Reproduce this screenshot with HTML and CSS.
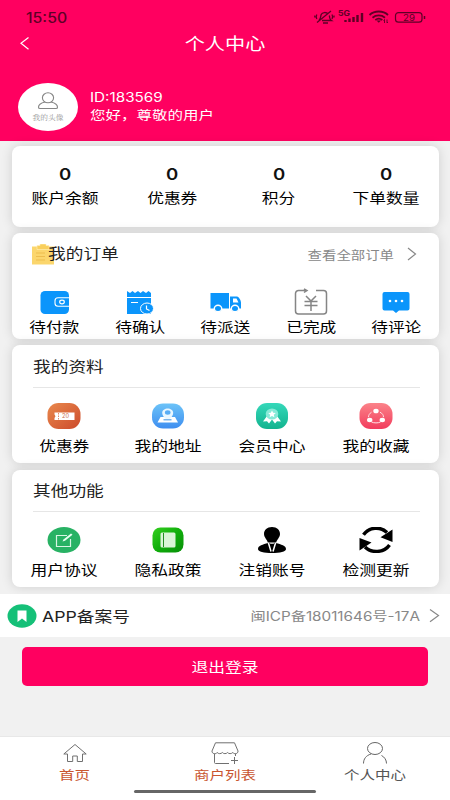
FILE: index.html
```html
<!DOCTYPE html>
<html lang="zh-CN">
<head>
<meta charset="utf-8">
<title>个人中心</title>
<link rel="stylesheet" href="styles.css">
</head>
<body>
<svg width="0" height="0" class="defs">
  <defs>
    <linearGradient id="orange" x1="0" y1="0" x2="1" y2="1"><stop offset="0" stop-color="#e9894d"/><stop offset="1" stop-color="#cc4a2b"/></linearGradient>
    <linearGradient id="blue" x1="0" y1="0" x2="0" y2="1"><stop offset="0" stop-color="#6cc3f8"/><stop offset="1" stop-color="#3e8ef0"/></linearGradient>
    <linearGradient id="teal" x1="0" y1="0" x2="0" y2="1"><stop offset="0" stop-color="#35d8ba"/><stop offset="1" stop-color="#12b38e"/></linearGradient>
    <linearGradient id="rose" x1="0" y1="0" x2="0" y2="1"><stop offset="0" stop-color="#fb8389"/><stop offset="1" stop-color="#f23c5d"/></linearGradient>
    <linearGradient id="green" x1="0" y1="0" x2="1" y2="1"><stop offset="0" stop-color="#35cf20"/><stop offset=".5" stop-color="#10ae0b"/><stop offset="1" stop-color="#078f08"/></linearGradient>
  </defs>
</svg>
<header class="top">
  <div class="status">
    <span class="clock">15:50</span>
    <svg class="signals" width="112" height="16" viewBox="0 0 112 16" fill="none" stroke="#5e0026">
      <g stroke-width="1.3"><path d="M5 11.5c2-2 1.500-4 2.200-6 1-2.300 5-2.800 7-.5M15.300 6.500c.8 3-.2 3.500 2.200 5H8M9 14h5M3 13.500L17 2M2.800 5.500c-.8 1.500-.8 3 0 4.500M.8 6.500v2M18 5.500c.8 1.500.8 3 0 4.500M20 6.500v2"/></g>
      <g stroke-width="2.400"><path d="M31.500 13v-2M35.500 13v-3.500M39.500 13V8M43.500 13V6M48 13V4"/></g>
      <g stroke-width="1.800"><path d="M55.500 6c5-4.700 13.500-4.700 18.500 0M58.500 8.700c3.500-3 9-3 12.500 0M61.300 11c2-1.500 5-1.500 7 0"/></g>
      <path d="M62.500 11.500h4.500l-2.200 2.300z" fill="#5e0026" stroke="none"/>
      <path d="M70.500 14v-3.500M69.500 11.500l1-1M73 10.500V14l1-1" stroke-width=".9"/>
      <rect x="81.500" y="3.600" width="26.500" height="9.600" rx="3" stroke-width="1.200"/>
      <path d="M110.500 7v3" stroke-width="1.500"/>
      <text class="net" x="24" y="7" textLength="12" lengthAdjust="spacingAndGlyphs">5G</text>
      <text class="bat" x="89" y="11.600" textLength="12" lengthAdjust="spacingAndGlyphs">29</text>
    </svg>
  </div>
  <div class="navbar">
    <svg class="back" width="12" height="14" viewBox="0 0 12 14"><path d="M9.500 .5L2 6.300l7.500 6" fill="none" stroke="#fff" stroke-width="1.200"/></svg>
    <h1 class="wide">个人中心</h1>
  </div>
  <div class="profile">
    <div class="avatar">
      <svg width="22" height="18" viewBox="0 0 22 18" fill="none" stroke="#858585" stroke-width="1.100"><ellipse cx="11" cy="5.800" rx="5.600" ry="5"/><path d="M8 10c-4 1-6.500 3.200-6.500 5.200 0 1 .7 1.300 1.500 1.300h16c1 0 1.500-.3 1.500-1.300 0-2-2.500-4.200-6.500-5.200"/></svg>
      <span>我的头像</span>
    </div>
    <div class="who"><span class="uid">ID:183569</span><span class="hello">您好，尊敬的用户</span></div>
  </div>
</header>

<main>
  <section class="card stats">
    <div class="cell"><b>0</b><span class="label">账户余额</span></div>
    <div class="cell"><b>0</b><span class="label">优惠券</span></div>
    <div class="cell"><b>0</b><span class="label">积分</span></div>
    <div class="cell"><b>0</b><span class="label">下单数量</span></div>
  </section>

  <section class="card orders">
    <div class="head">
      <svg class="clip" width="23" height="21" viewBox="0 0 23 21"><path d="M0 2.500h22v18H0z" fill="#fbd66d"/><path d="M5 1.500h3V0h6v1.500h3v4H5z" fill="#f9cf5c" stroke="#fff0bd" stroke-width=".6"/><path d="M4 9h9M4 12.500h9M4 16h9" stroke="#edbd4e"/></svg>
      <h2>我的订单</h2>
      <span class="all">查看全部订单</span>
      <svg class="more" width="10" height="14" viewBox="0 0 10 14"><path d="M1 1l7.500 6L1 13" fill="none" stroke="#888" stroke-width="1.200"/></svg>
    </div>
    <div class="grid">
      <div class="cell">
        <svg width="34" height="26" viewBox="0 0 34 26"><rect x="2.500" y="2" width="28.500" height="23" rx="4.500" fill="#0b95fb"/><path d="M31 8.800H20a3 3 0 0 0-3 3v2.500a3 3 0 0 0 3 3h11" fill="none" stroke="#fff" stroke-width="1.100"/><ellipse cx="24" cy="13" rx="2.300" ry="1.800" fill="none" stroke="#fff" stroke-width="1.200"/></svg>
        <span class="label">待付款</span>
      </div>
      <div class="cell">
        <svg width="34" height="26" viewBox="0 0 34 26"><path d="M4 2l3 2 2.500-2L12 4l3-2 2.500 2L20 2l3 2 2.500-2L28 4V25H4z" fill="#0b95fb"/><path d="M4 8.500h24M8 13.500h7" stroke="#fff" stroke-width="1.100"/><ellipse cx="24" cy="19.500" rx="6.500" ry="5.500" fill="#0b95fb" stroke="#fff"/><path d="M23.500 16.500v3.500l3 1.500" fill="none" stroke="#fff" stroke-width="1.200"/></svg>
        <span class="label">待确认</span>
      </div>
      <div class="cell">
        <svg width="34" height="26" viewBox="0 0 34 26"><path d="M1.500 4H20v15.500H1.500zM21 7.500h7c2 .5 4 4 4 6v6H21z" fill="#0b95fb"/><path d="M24 9.500h3.500l2 4H24z" fill="#fff"/><g fill="#0b95fb" stroke="#fff" stroke-width="1.400"><ellipse cx="9" cy="19.500" rx="3.700" ry="3.200"/><ellipse cx="26" cy="19.500" rx="3.700" ry="3.200"/></g></svg>
        <span class="label">待派送</span>
      </div>
      <div class="cell">
        <svg class="yen" width="34" height="28" viewBox="0 0 34 28" fill="none" stroke="#858585" stroke-width="1.500"><path d="M13 2.500H4.500a3 3 0 0 0-3 3V23a3 3 0 0 0 3 3h25a3 3 0 0 0 3-3V5.500a3 3 0 0 0-3-3H22M10 .8l3 1.700-3 2M12 8l5 5 5-5M10.500 13.500h13M10.500 17.500h13M17 13v10"/></svg>
        <span class="label">已完成</span>
      </div>
      <div class="cell">
        <svg width="34" height="26" viewBox="0 0 34 26"><path d="M5.500 3h23a2 2 0 0 1 2 2v14.500a2 2 0 0 1-2 2H20L17 24l-3-2.500H5.500a2 2 0 0 1-2-2V5a2 2 0 0 1 2-2z" fill="#0b95fb"/><g fill="#fff"><circle cx="11" cy="12" r="1.300"/><circle cx="17" cy="12" r="1.300"/><circle cx="23" cy="12" r="1.300"/></g></svg>
        <span class="label">待评论</span>
      </div>
    </div>
  </section>

  <section class="card tools">
    <h2>我的资料</h2>
    <div class="grid">
      <div class="cell">
        <svg width="34" height="26" viewBox="0 0 34 26"><rect x=".5" width="33" height="26" rx="11" fill="url(#orange)"/><path d="M7.500 9.500h20V17h-20v-2l1-1.700-1-1.700z" fill="#fff"/><path d="M11.500 10v6.500" stroke="#e08a6a" stroke-dasharray="1.500 1"/><text class="amount" x="15" y="15.200" textLength="7" lengthAdjust="spacingAndGlyphs">20</text></svg>
        <span class="label">优惠券</span>
      </div>
      <div class="cell">
        <svg width="34" height="26" viewBox="0 0 34 26"><rect x="1" y=".5" width="32" height="25" rx="11" fill="url(#blue)"/><path d="M9.500 14h14.500l3 5.500H6.500z" fill="#fff"/><path d="M16.700 17.500c-3-2.500-5.500-4.500-5.500-7.500 0-6 11-6 11 0 0 3-2.500 5-5.500 7.500z" fill="#e9f7ff"/><ellipse cx="16.700" cy="9.500" rx="2.800" ry="2.200" fill="#58adf5"/><path d="M12.500 16.800h8" stroke="#58a3e8" stroke-width="1.200"/></svg>
        <span class="label">我的地址</span>
      </div>
      <div class="cell">
        <svg width="34" height="26" viewBox="0 0 34 26"><rect x="1" width="32" height="26" rx="11" fill="url(#teal)"/><path d="M12 13l-4 5.500 4-.3 2 2.300 3-4 3 4 2-2.300 4 .3-4-5.500z" fill="#fff"/><ellipse cx="17" cy="11" rx="6.300" ry="5.500" fill="#88ead8"/><path d="M17 7.500l1.200 2.300 2.600.3-2 1.700.6 2.400-2.400-1.200-2.400 1.200.6-2.400-2-1.700 2.600-.3z" fill="#fff"/></svg>
        <span class="label">会员中心</span>
      </div>
      <div class="cell">
        <svg width="34" height="26" viewBox="0 0 34 26"><rect x=".5" width="33" height="26" rx="11" fill="url(#rose)"/><path d="M12.500 9.200c-2 1.300-3 2.800-3 5M21 9.200c2.500 1.300 3.500 2.800 3.500 5M12.500 19c2.500 1.200 6.500 1.200 9 0" fill="none" stroke="#ffe0e4"/><g fill="#fff"><ellipse cx="17" cy="8" rx="2.700" ry="2.300"/><ellipse cx="10.700" cy="17" rx="2.700" ry="2.200"/><ellipse cx="23.300" cy="17" rx="2.700" ry="2.200"/></g></svg>
        <span class="label">我的收藏</span>
      </div>
    </div>
  </section>

  <section class="card tools other">
    <h2>其他功能</h2>
    <div class="grid">
      <div class="cell">
        <svg width="34" height="26" viewBox="0 0 34 26"><ellipse cx="17" cy="13" rx="16.500" ry="13" fill="#28b264"/><path d="M20 8.500H9.500V19.500h14V12" fill="none" stroke="#d8f5e3" stroke-width="1.200"/><path d="M15.500 14.500l1-2 7.500-6 1.500 1.200-7.500 6z" fill="#eafff2"/></svg>
        <span class="label">用户协议</span>
      </div>
      <div class="cell">
        <svg width="34" height="26" viewBox="0 0 34 26"><rect x="1.500" y=".5" width="31" height="25" rx="8" fill="url(#green)"/><rect x="9.500" y="5.500" width="15" height="15" rx="1.500" fill="#d9f5d6"/><path d="M12.500 6v14" stroke="#238d22"/></svg>
        <span class="label">隐私政策</span>
      </div>
      <div class="cell">
        <svg width="34" height="26" viewBox="0 0 34 26"><path d="M17 0c5 0 8 3 8 7 0 3.500-3.500 6-4 9h-8c-.5-3-4-5.500-4-9 0-4 3-7 8-7z"/><path d="M13 16h8c5 1.500 10 2.500 10 6 0 2.600-6 4-14 4S3 24.600 3 22c0-3.500 5-4.500 10-6z"/><path d="M13.300 15.500l2.700 9M20.700 15.500l-2.700 9" stroke="#fff" stroke-width="1.500"/><path d="M14 15.500h6l-1.500 1.300h-3z" fill="#fff"/></svg>
        <span class="label">注销账号</span>
      </div>
      <div class="cell">
        <svg width="34" height="26" viewBox="0 0 34 26"><path d="M4.500 7.800C10-.3 21.500-.8 28 5.500M30.500 18C25 26 12.500 26.500 6 20" fill="none" stroke="#000" stroke-width="3.400"/><path d="M33.500 2.500V15L21.500 10.300zM.5 11v12.500L12.500 15.500z"/></svg>
        <span class="label">检测更新</span>
      </div>
    </div>
  </section>

  <div class="record">
    <svg width="30" height="24" viewBox="0 0 30 24"><ellipse cx="15" cy="12" rx="14.500" ry="11.700" fill="#15c078"/><path d="M10.500 6.500h9V18L15 14.500 10.500 18z" fill="#fff"/></svg>
    <span class="name">APP备案号</span>
    <span class="number">闽ICP备18011646号-17A</span>
    <svg class="more" width="11" height="14" viewBox="0 0 11 14"><path d="M1 .5L9.500 6.500 1 12.700" fill="none" stroke="#888" stroke-width="1.200"/></svg>
  </div>

  <button class="logout"><span class="label">退出登录</span></button>
</main>

<nav class="tabs">
  <div class="tab">
    <svg width="34" height="24" viewBox="0 0 34 24" fill="none" stroke="#707070"><path d="M17 2.500L5.800 12H9.500v7.500h5.200V14h4.600v5.500h5.200V12h3.700z"/></svg>
    <span>首页</span>
  </div>
  <div class="tab">
    <svg width="34" height="24" viewBox="0 0 34 24" fill="none" stroke="#707070"><path d="M7.500.8h19L30 9c.3 3-4 3.500-5.200 1.500-1.300 1.500-4.200 1.500-5.200 0-1.200 1.500-4.200 1.500-5.200 0-1.300 1.500-4.200 1.500-5.200 0C8 12.500 3.700 12 4 9zM6.500 12v8.500c0 .6.400 1 1 1H21M27.500 12v2M23 18.500h7M26.500 15v7"/></svg>
    <span>商户列表</span>
  </div>
  <div class="tab me">
    <svg width="34" height="24" viewBox="0 0 34 24" fill="none" stroke="#666"><ellipse cx="17" cy="6.500" rx="7.500" ry="6"/><path d="M13 12C8 13.500 5.500 17 5.500 21.500M23.500 13.500c3 1.500 5 4.500 5 8"/></svg>
    <span>个人中心</span>
  </div>
  <i class="homebar"></i>
</nav>
</body>
</html>
```

FILE: styles.css
```css
* { box-sizing: border-box; }
body {
  margin: 0;
  width: 450px;
  height: 800px;
  display: flex;
  flex-direction: column;
  overflow: hidden;
  background: #f1f1f1;
  color: #111;
  font-family: Inter, "Noto Sans CJK SC", sans-serif;
}
h1, h2 { margin: 0; font-weight: 400; width: fit-content; }
svg { display: block; flex: none; }
span { white-space: nowrap; }
.defs { position: absolute; }

.top { height: 141px; background: #ff0060; color: #fff; }
.status {
  height: 30px;
  padding: 4px 24px 0 26px;
  display: flex;
  align-items: center;
  justify-content: space-between;
}
.clock {
  color: #5e0026;
  font-size: 14px;
  font-weight: 500;
  transform: scaleX(1.13);
  transform-origin: left;
}
.signals text { fill: #5e0026; stroke: none; }
.net { font-size: 7px; font-weight: 700; }
.bat { font-size: 9px; }
.amount { font-size: 5.500px; fill: #c9694a; }
.navbar {
  height: 28px;
  display: grid;
  grid-template-columns: 40px 1fr 40px;
  align-items: center;
}
.back { margin-left: 19px; }
h1 { justify-self: center; font-size: 16.500px; line-height: 24px; }
.wide { transform: scaleX(1.22); }
.profile { display: flex; margin: 25px 0 0 18px; }
.avatar {
  width: 60px;
  height: 48px;
  border-radius: 50%;
  background: #fff;
  display: flex;
  flex-direction: column;
  align-items: center;
  padding-top: 9px;
}
.avatar span {
  margin-top: 2px;
  color: #999;
  font: 7px/11px "Noto Serif CJK SC", "Noto Sans CJK SC", sans-serif;
  transform: scaleX(1.1);
}
.who {
  display: flex;
  flex-direction: column;
  align-items: flex-start;
  padding: 6px 0 0 12px;
  line-height: 18px;
}
.uid { font-size: 12.500px; transform: scaleX(1.22); transform-origin: left; }
.hello { font-size: 12.500px; transform: scaleX(1.24); transform-origin: left; }

main { flex: 1; padding-top: 5px; }
.card {
  width: 427px;
  margin: 0 0 6px 12px;
  background: #fff;
  border-radius: 8px;
  box-shadow: 0 0 12px rgba(0, 0, 0, .14);
}
.cell { flex: 1 1 0; display: flex; flex-direction: column; align-items: center; }
.label { font-size: 13.500px; line-height: 20px; transform: scaleX(1.24); color: #000; }
.grid { display: flex; }

.stats { height: 81px; display: flex; padding-top: 18px; }
.stats b { font-size: 15.500px; line-height: 21px; font-weight: 600; transform: scaleX(1.2); }
.stats .label { margin-top: 3px; }

.orders { height: 106px; }
.head { height: 42px; display: flex; align-items: center; padding: 0 22px 0 20px; }
h2 {
  font-size: 14.500px;
  line-height: 22px;
  color: #222;
  transform: scaleX(1.22);
  transform-origin: left;
}
.head h2 { margin-left: -7px; }
.all {
  margin-left: auto;
  margin-right: 13px;
  color: #888;
  font-size: 12px;
  transform: scaleX(1.2);
  transform-origin: right;
}
.orders .grid { padding-top: 14px; }
.orders .label { margin-top: 2px; }
.orders .cell .yen { margin: -1px 0; }

.tools { height: 118px; margin-bottom: 7px; padding: 11px 11px 0 0; }
.tools h2 { margin-left: 21px; }
.tools .grid { margin-top: 9px; padding-top: 16px; position: relative; }
.tools .grid::before {
  content: "";
  position: absolute;
  top: 0;
  left: 21px;
  width: 387px;
  border-top: 1px solid #e6e6e6;
}
.tools .label { margin-top: 7px; }
.other { height: 117px; padding-top: 10px; }

.record {
  position: relative;
  height: 43px;
  display: flex;
  align-items: center;
  padding: 0 10px 0 7px;
  background: #fff;
}
.name { margin-left: 5px; font-size: 15px; transform: scaleX(1.18); transform-origin: left; color: #222; }
.number {
  margin-left: auto;
  margin-right: 9px;
  font-size: 12.500px;
  color: #888;
  transform: scaleX(1.22);
  transform-origin: right;
}
.logout {
  display: block;
  width: 406px;
  height: 39px;
  margin: 10px 0 0 22px;
  padding: 0;
  border: 0;
  border-radius: 5px;
  background: #ff0060;
  font-family: inherit;
}
.logout .label { display: inline-block; color: #fff; }

.tabs {
  position: relative;
  height: 63px;
  display: flex;
  padding-top: 5px;
  background: #fff;
  box-shadow: 0 -1px 0 #e8e8e8;
}
.tab { flex: 1; display: flex; flex-direction: column; align-items: center; color: #c9552f; }
.tab span { font-size: 12.500px; line-height: 19px; transform: scaleX(1.24); }
.me { color: #555; }
.homebar {
  position: absolute;
  left: 134px;
  top: 53px;
  width: 182px;
  height: 3px;
  border-radius: 2px;
  background: #666;
}
```
